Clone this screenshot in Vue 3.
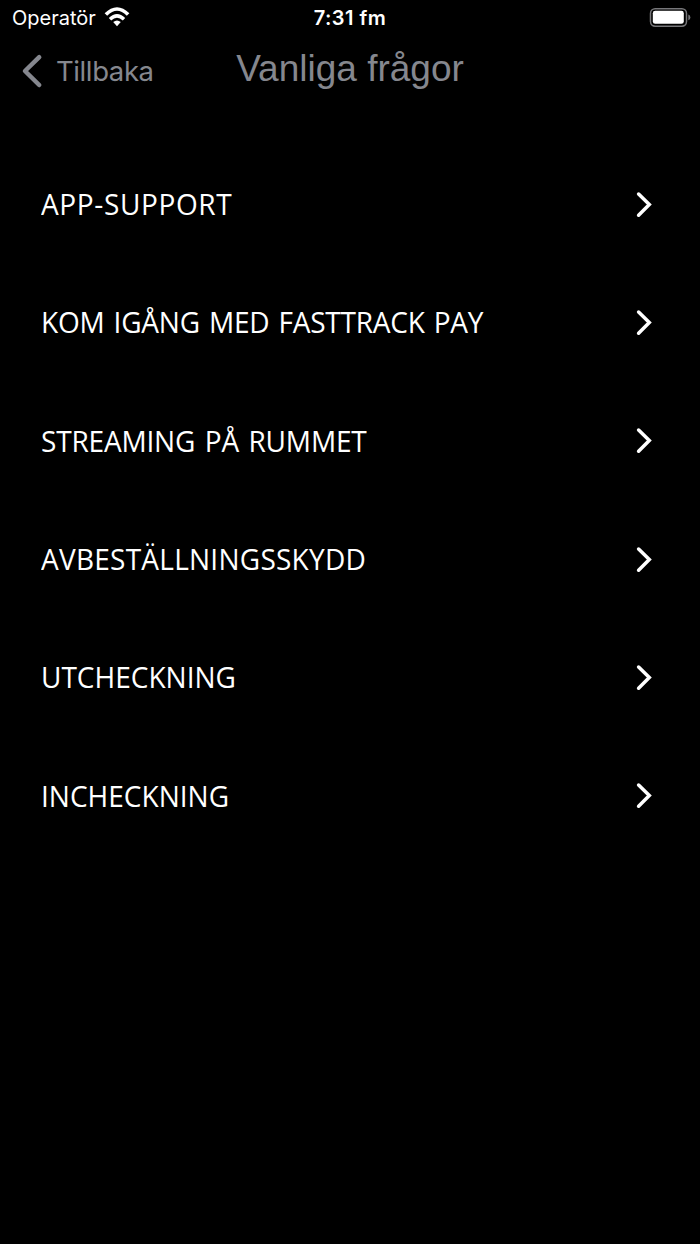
<template>
  <div class="screen">
    <div class="status-bar">
      <div class="carrier">
        <span class="carrier-name">Operatör</span>
        <svg class="wifi" width="26" height="22" viewBox="0 -1 26 22">
          <path d="M1.9 6.6 Q13 -4.6 24.1 6.6" stroke-width="3.6" />
          <path d="M6 11.3 Q13 4.5 20 11.3" stroke-width="3.4" />
          <path class="dot" d="M9.2 14.1 Q13 10.7 16.8 14.1 L13 18.2 Z" />
        </svg>
      </div>
      <span class="time">7:31 fm</span>
      <svg class="battery" width="42" height="20" viewBox="0 0 42 20">
        <rect class="shell" x="1.5" y="0.8" width="36" height="17.4" rx="4.6" />
        <rect class="charge" x="3.8" y="2.8" width="31" height="13" rx="2.4" />
        <path class="cap" d="M39.3 6.6 Q41.4 7.4 41.4 9.4 Q41.4 11.4 39.3 12.2 Z" />
      </svg>
    </div>

    <header class="nav-bar">
      <a class="back">
        <svg width="22" height="36" viewBox="0 0 22 36">
          <path d="M18.2 4.2 L4 18 L18.2 32" />
        </svg>
        <span class="back-label">Tillbaka</span>
      </a>
      <h1>Vanliga frågor</h1>
    </header>

    <ul class="topics">
      <li v-for="topic in topics" :key="topic.id" :class="['topic', topic.id]">
        <span class="topic-title">{{ topic.title }}</span>
        <svg width="18" height="28" viewBox="0 0 18 28">
          <path d="M2.6 3 L13.3 13.6 L2.6 24.2" />
        </svg>
      </li>
    </ul>
  </div>
</template>

<script setup>
import { ref } from 'vue';

const topics = ref([
  { id: 'support', title: 'APP-SUPPORT' },
  { id: 'pay', title: 'KOM IGÅNG MED FASTTRACK PAY' },
  { id: 'streaming', title: 'STREAMING PÅ RUMMET' },
  { id: 'cancellation', title: 'AVBESTÄLLNINGSSKYDD' },
  { id: 'checkout', title: 'UTCHECKNING' },
  { id: 'checkin', title: 'INCHECKNING' },
]);
</script>

<style>
body {
  background-color: #000;
}
</style>

<style scoped>
.screen {
  min-height: 1244px;
  background-color: #000;
  color: #fff;
  font-family: Inter, "Liberation Sans", sans-serif;
}

.status-bar {
  display: grid;
  grid-template-columns: 1fr auto 1fr;
  align-items: center;
  height: 36px;
  padding: 0 9px 0 12px;
  box-sizing: border-box;
}

.carrier {
  display: flex;
  align-items: center;
  gap: 8px;
}

.carrier-name {
  font-size: 20px;
  line-height: 36px;
}

.wifi {
  fill: none;
  stroke: #fff;
}

.wifi .dot {
  fill: #fff;
  stroke: none;
}

.time {
  margin-left: -3px;
  font-size: 20px;
  font-weight: 600;
  letter-spacing: 0.5px;
}

.battery {
  justify-self: end;
}

.shell {
  fill: none;
  stroke: #77777a;
  stroke-width: 1.5;
}

.charge {
  fill: #fff;
}

.cap {
  fill: #77777a;
}

.nav-bar {
  display: grid;
  grid-template-columns: 1fr auto 1fr;
  height: 70px;
  padding: 0 21px;
  color: #85878e;
}

.back {
  display: flex;
  align-items: center;
  gap: 13px;
}

.back svg {
  fill: none;
  stroke: #85878e;
  stroke-width: 4.5;
  stroke-linecap: round;
  stroke-linejoin: round;
}

.back-label {
  font-size: 27.5px;
  font-weight: 400;
  letter-spacing: -0.4px;
}

h1 {
  margin: 0;
  font-family: "Liberation Sans", sans-serif;
  font-size: 37px;
  font-weight: 400;
  line-height: 66px;
}

.topics {
  list-style-type: none;
  margin: 39.5px 0 0;
  padding: 0 46px 0 41px;
}

.topic {
  display: flex;
  align-items: center;
  justify-content: space-between;
  height: 118.3px;
}

.topic-title {
  padding-bottom: 2px;
  font-family: "Open Sans", "Noto Sans", sans-serif;
  font-size: 29.5px;
  white-space: nowrap;
  transform: scaleX(0.95);
  transform-origin: left center;
}

.support .topic-title {
  letter-spacing: 0.65px;
}

.pay .topic-title {
  letter-spacing: -0.25px;
  word-spacing: 2.2px;
}

.streaming .topic-title {
  letter-spacing: -0.2px;
  word-spacing: 2.6px;
}

.cancellation .topic-title {
  letter-spacing: 0.25px;
}

.topic svg {
  fill: none;
  stroke: #fff;
  stroke-width: 3.5;
  stroke-linecap: round;
}
</style>
